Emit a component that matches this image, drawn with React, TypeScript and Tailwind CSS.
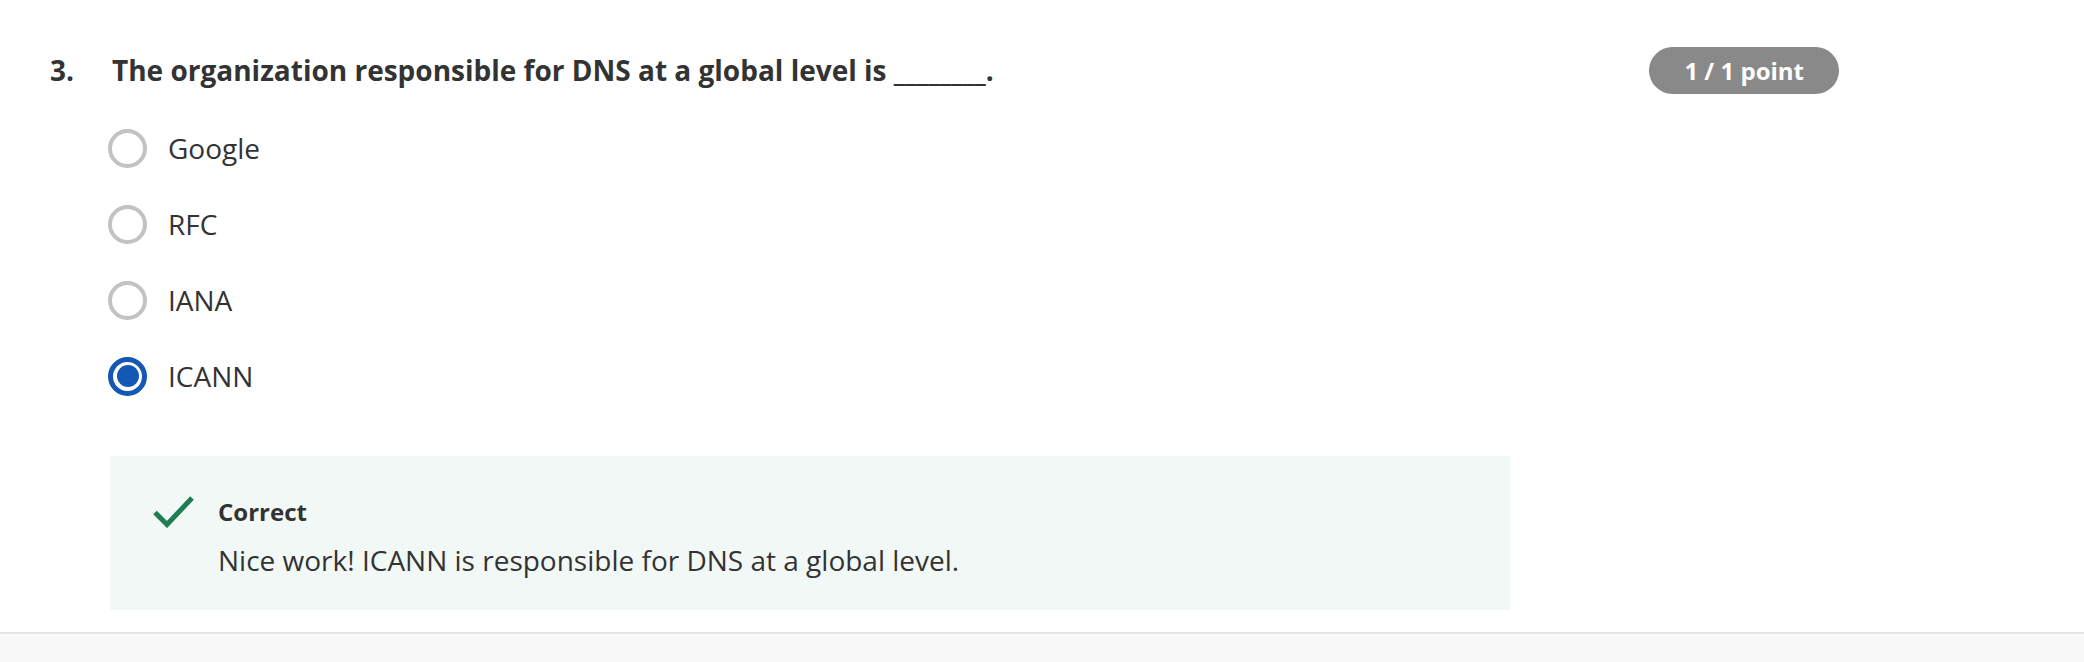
import React, { useState } from "react";

const options = ["Google", "RFC", "IANA", "ICANN"];

export default function App() {
  const [picked] = useState("ICANN");

  return (
    <div className="w-full h-[662px] flex flex-col bg-white text-[#333333] font-['Open_Sans',sans-serif] overflow-hidden">
      <div className="flex-1 pl-[50px] pr-[245px] pt-[47px]">
        {/* Question header */}
        <div className="h-[47px] flex items-center">
          <span className="w-[62px] text-[28px] leading-[39px] font-bold">3.</span>
          <h2 className="flex-1 text-[28px] leading-[39px] font-bold">
            The organization responsible for DNS at a global level is ________.
          </h2>
          <span className="h-[47px] px-[35px] rounded-full bg-[#898989] text-white text-[24px] font-bold flex items-center">
            1 / 1 point
          </span>
        </div>

        {/* Options */}
        <div className="mt-[16px] ml-[58px] flex flex-col">
          {options.map((opt) => (
            <label key={opt} className="h-[76px] flex items-center gap-[21px]">
              {picked === opt ? (
                <span className="w-[39px] h-[39px] rounded-full border-[5px] border-[#1358b4] flex items-center justify-center">
                  <span className="w-[22px] h-[22px] rounded-full bg-[#1358b4]" />
                </span>
              ) : (
                <span className="w-[39px] h-[39px] rounded-full border-[4px] border-[#c2c2c2]" />
              )}
              <span className="text-[28px] leading-[39px]">{opt}</span>
            </label>
          ))}
        </div>

        {/* Feedback */}
        <div className="mt-[42px] ml-[60px] w-[1400px] h-[154px] bg-[#f2f8f6] pl-[43px] pt-[40px] flex">
          <svg width="41" height="32" viewBox="0 0 41 32" className="shrink-0">
            <path d="M2 16.5 L14 28.5 L39 2" fill="none" stroke="#1e7d52" strokeWidth="5" />
          </svg>
          <div className="ml-[24px] flex flex-col">
            <span className="text-[24px] leading-[32px] font-bold">Correct</span>
            <p className="mt-[13px] text-[28px] leading-[39px]">
              Nice work! ICANN is responsible for DNS at a global level.
            </p>
          </div>
        </div>
      </div>
      <div className="h-[30px] border-t-2 border-[#e5e5e5] bg-[#f8f8f8]" />
    </div>
  );
}
